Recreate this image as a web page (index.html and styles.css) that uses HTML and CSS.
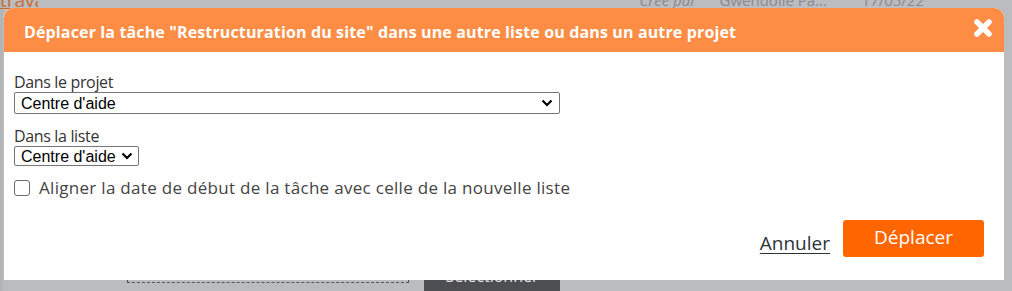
FILE: index.html
```html
<!DOCTYPE html>
<html lang="fr">
<head>
<meta charset="utf-8">
<title>Déplacer la tâche</title>
<link rel="stylesheet" href="styles.css">
</head>
<body>
<div class="page">
  <div class="page-top">
    <span class="page-link">travail</span>
    <div class="page-meta">
      <span class="meta-label">Créé par</span>
      <span class="meta-name">Gwendolle Pa...</span>
      <span class="meta-date">17/05/22</span>
    </div>
  </div>
  <div class="page-bottom">
    <div class="dropzone"></div>
    <div class="dark-btn">Sélectionner</div>
  </div>
</div>

<div class="modal">
  <div class="modal-header">
    <h1 class="modal-title">Déplacer la tâche "Restructuration du site" dans une autre liste ou dans un autre projet</h1>
    <button class="close" type="button" aria-label="Fermer">
      <svg width="20" height="20" viewBox="0 0 20 20"><path d="M4 4L16 16M16 4L4 16" stroke="#fff" stroke-width="5.5" stroke-linecap="round" fill="none"/></svg>
    </button>
  </div>
  <div class="modal-body">
    <label class="field-label">Dans le projet</label>
    <span class="select-wrap wide">
      <select class="select"><option>Centre d'aide</option></select>
      <svg class="chev" width="12" height="8" viewBox="0 0 12 8"><path d="M1.5 1.5L6 6L10.5 1.5" stroke="#000" stroke-width="2.2" fill="none"/></svg>
    </span>
    <label class="field-label second">Dans la liste</label>
    <span class="select-wrap narrow">
      <select class="select"><option>Centre d'aide</option></select>
      <svg class="chev" width="12" height="8" viewBox="0 0 12 8"><path d="M1.5 1.5L6 6L10.5 1.5" stroke="#000" stroke-width="2.2" fill="none"/></svg>
    </span>
    <label class="check-row"><span class="checkbox"></span>Aligner la date de début de la tâche avec celle de la nouvelle liste</label>
    <div class="actions">
      <a class="cancel" href="#">Annuler</a>
      <button class="primary" type="button">Déplacer</button>
    </div>
  </div>
</div>
</body>
</html>
```
FILE: styles.css
```css
* { box-sizing: border-box; }
html, body { margin: 0; padding: 0; }
body {
  width: 1012px;
  height: 291px;
  overflow: hidden;
  background: #bbbcbf;
  font-family: "Open Sans", "Liberation Sans", sans-serif;
  position: relative;
}

/* dimmed page behind the dialog */
.page {
  height: 291px;
  display: flex;
  flex-direction: column;
  justify-content: space-between;
  border-left: 3px solid #b3b4b7;
}
.page-top {
  display: flex;
  justify-content: space-between;
  height: 12px;
  overflow: hidden;
  margin-left: -3px;
}
.page-link {
  display: block;
  width: 38px;
  overflow: hidden;
  white-space: nowrap;
  margin-top: -9px;
  font-size: 19px;
  line-height: 19px;
  color: #c56d2d;
  text-decoration: underline;
}
.page-meta {
  display: flex;
  margin-top: -7px;
  margin-right: 88px;
  font-size: 15px;
  line-height: 15px;
  color: #8a8a8c;
}
.meta-label { width: 80px; font-style: italic; }
.meta-name { width: 142px; }
.page-bottom {
  display: flex;
  align-items: flex-end;
  height: 40px;
  padding-left: 124px;
}
.dropzone {
  width: 282px;
  height: 36px;
  border: 1px dashed #55565a;
  margin-bottom: 8px;
}
.dark-btn {
  width: 136px;
  height: 40px;
  margin-left: 15px;
  margin-bottom: -10px;
  background: #4d4e52;
  color: #e8e8e8;
  font-size: 16px;
  display: flex;
  align-items: flex-end;
  justify-content: center;
  padding-bottom: 14px;
}

/* dialog */
.modal {
  position: absolute;
  left: 4px;
  top: 8px;
  width: 1000px;
  background: #fff;
  border-radius: 10px 10px 0 0;
  overflow: hidden;
}
.modal-header {
  height: 44px;
  background: #fd8d45;
  display: flex;
  align-items: center;
  justify-content: space-between;
  padding: 0 11px 0 20px;
}
.modal-title {
  margin: 0;
  font-size: 16px;
  font-weight: 700;
  letter-spacing: 0.14px;
  color: #fff;
  line-height: 20px;
  padding-top: 3px;
}
.close {
  border: 0;
  background: none;
  padding: 0;
  width: 20px;
  height: 20px;
  margin-top: -4px;
  display: flex;
}
.modal-body {
  padding: 21px 20px 23px 10px;
  display: flex;
  flex-direction: column;
  align-items: flex-start;
  color: #333;
}
.field-label {
  font-size: 16px;
  letter-spacing: -0.35px;
  line-height: 19px;
  color: #333;
}
.field-label.second { margin-top: 13px; }
.select-wrap {
  position: relative;
  display: block;
}
.select-wrap.wide { width: 546px; }
.select-wrap.narrow { width: 125px; }
.select {
  -webkit-appearance: none;
  appearance: none;
  display: block;
  width: 100%;
  margin: 0;
  font-family: "Liberation Sans", Arial, sans-serif;
  font-size: 16px;
  color: #000;
  background: #fff;
  border: 1px solid #767676;
  border-radius: 2px;
  padding: 0 20px 0 6px;
}
.wide .select { height: 22px; }
.narrow .select { height: 20px; }
.chev {
  position: absolute;
  right: 7px;
  top: 50%;
  margin-top: -4px;
  pointer-events: none;
}
.narrow .chev { right: 6px; }
.check-row {
  margin-top: 12px;
  display: flex;
  align-items: center;
  font-size: 17px;
  letter-spacing: 0.3px;
  line-height: 20px;
  color: #444;
}
.checkbox {
  width: 16px;
  height: 16px;
  border: 1px solid #6b6b6b;
  border-radius: 3px;
  margin-right: 9px;
  margin-left: 0;
  background: #fff;
}
.actions {
  align-self: stretch;
  margin-top: 22px;
  display: flex;
  justify-content: flex-end;
  align-items: center;
}
.cancel {
  font-size: 19px;
  color: #2d3436;
  text-decoration: underline;
  text-underline-offset: 3px;
  margin-right: 13px;
  margin-top: 9px;
}
.primary {
  width: 141px;
  height: 37px;
  border: 0;
  border-radius: 3px;
  background: #ff6600;
  color: #fff;
  font-family: "Open Sans", sans-serif;
  font-size: 19px;
  padding: 0 0 3px;
}
```
